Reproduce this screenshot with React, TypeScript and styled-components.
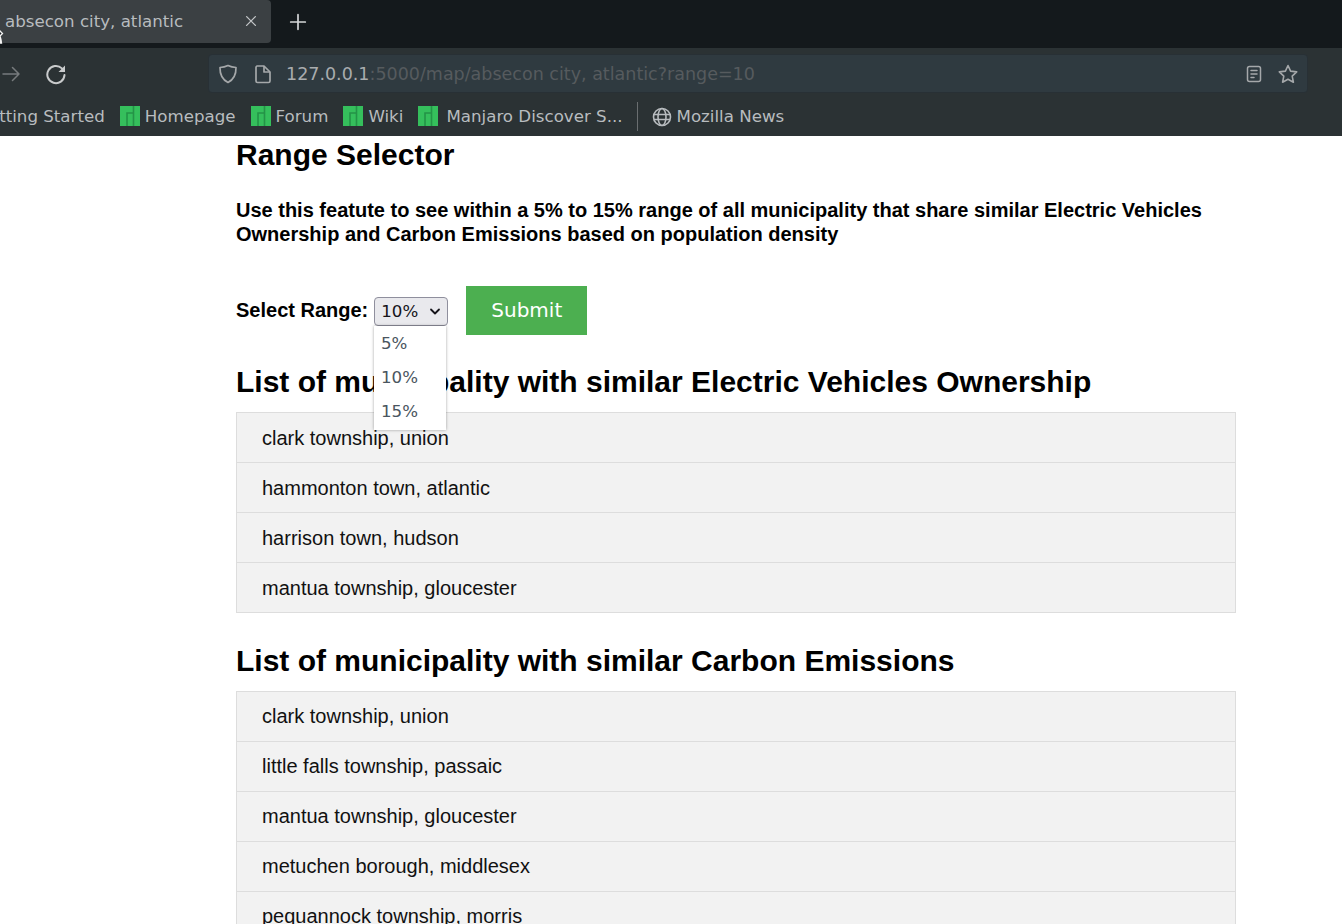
import React from "react";
import styled, { createGlobalStyle } from "styled-components";

const Global = createGlobalStyle`
  html, body { margin: 0; padding: 0; background: #fff; overflow: hidden; height: 924px; }
  #root { width: 1342px; height: 924px; overflow: hidden; }
`;
const Page = styled.div`width:1342px;height:924px;overflow:hidden;display:flex;flex-direction:column;font-family:"Liberation Sans",Arial,sans-serif;color:#000;`;
const Chrome = styled.header`flex:none;height:136px;background:#2b3234;display:flex;flex-direction:column;font-family:"DejaVu Sans",sans-serif;overflow:hidden;`;
const TabBar = styled.div`height:48px;flex:none;background:#14191c;display:flex;align-items:flex-start;position:relative;`;
const Tab = styled.div`width:271px;height:43px;background:#3b4043;border-radius:0 4px 4px 0;display:flex;align-items:center;padding:0 13px 1px 5px;box-sizing:border-box;justify-content:space-between;color:#b8bcbf;font-size:16.67px;`;
const TabClose = styled.span`display:flex;color:#c4c7c9;`;
const NewTab = styled.span`display:flex;margin:13px 0 0 18px;color:#d5d7d8;`;
const Cursor = styled.svg`position:absolute;left:-7px;top:27px;`;
const NavBar = styled.div`height:48px;box-sizing:border-box;padding:3px 0 0 2px;flex:none;display:flex;align-items:center;`;
const NavIcon = styled.span<{ $w: number; $c: string }>`display:flex;width:${p => p.$w}px;color:${p => p.$c};`;
const UrlBox = styled.div`width:1100px;height:39px;background:#2f3a40;border-radius:4px;border:1px solid #283035;box-sizing:border-box;display:flex;align-items:center;padding:0 8px 0 9px;font-size:17.5px;color:#565b5e;`;
const UrlHost = styled.span`color:#a9acae;`;
const UrlText = styled.div`margin-left:14px;flex:1;white-space:nowrap;`;
const UrlIcon = styled.span<{ $m?: number }>`display:flex;color:#a5a8aa;margin-left:${p => p.$m ?? 0}px;`;
const BookmarkBar = styled.div`height:40px;flex:none;display:flex;align-items:center;white-space:nowrap;color:#b8bcbf;font-size:16.67px;`;
const Bookmark = styled.span<{ $ml?: number; $gap?: number }>`display:flex;align-items:center;gap:${p => p.$gap ?? 5}px;margin-left:${p => p.$ml ?? 0}px;`;
const Divider = styled.span`width:1px;height:29px;background:#6a6e70;margin:0 14px 0 14px;`;
const Content = styled.main`margin-left:236px;width:1000px;flex:1;min-height:0;`;
const Title = styled.h2`margin:0;padding-top:1px;font-size:30px;line-height:35px;font-weight:700;`;
const Lead = styled.p`margin:26px 0 0;font-size:20px;line-height:24px;font-weight:700;`;
const FormRow = styled.form`margin-top:40px;height:48px;display:flex;align-items:center;position:relative;`;
const Label = styled.label`font-size:20px;font-weight:700;margin-right:6px;`;
const SelectBox = styled.div`box-sizing:border-box;width:74px;height:29px;margin-top:2px;background:#e9e9ed;border:1px solid #8f8f9d;border-radius:4px;display:flex;align-items:center;justify-content:space-between;padding:0 6px 0 6px;font-family:"DejaVu Sans",sans-serif;font-size:16.67px;color:#15141a;`;
const Menu = styled.ul`position:absolute;left:138px;top:40px;width:72px;height:104px;padding:1px 0;box-sizing:border-box;margin:0;list-style:none;background:#fff;box-shadow:0 0 3px rgba(0,0,0,.35);z-index:2;font-family:"DejaVu Sans",sans-serif;font-size:16.67px;color:#4a5560;`;
const MenuItem = styled.li`height:34px;line-height:34px;padding-left:7px;`;
const Submit = styled.button`margin-left:18px;width:121px;height:49px;border:0;padding:0;background:#4caf50;color:#fff;font-family:"DejaVu Sans",sans-serif;font-size:20px;`;
const ListTitle = styled.h2<{ $mt: number }>`margin:${p => p.$mt}px 0 13px;font-size:30px;line-height:35px;font-weight:700;`;
const List = styled.ul`margin:0;padding:0;list-style:none;border:1px solid #ddd;border-bottom:0;background:#f2f2f2;`;
const Row = styled.li<{ $lh: number }>`box-sizing:border-box;height:50px;line-height:${p => p.$lh}px;padding-left:25px;font-size:20px;color:#111;border-bottom:1px solid #ddd;`;

const Manjaro = () => (
  <svg width="20" height="20" viewBox="0 0 20 20">
    <rect width="20" height="20" fill="#35bf5c" />
    <path d="M7 20V7h6.500M13.500 0v20" fill="none" stroke="#249347" strokeWidth="1.600" />
  </svg>
);
const Cross = ({ s, w }: { s: number; w: number }) => (
  <svg width={s} height={s} viewBox="0 0 16 16" fill="none" stroke="currentColor" strokeWidth={w} strokeLinecap="round"><path d="M3 3l10 10M13 3L3 13" /></svg>
);
const List1 = ["clark township, union", "hammonton town, atlantic", "harrison town, hudson", "mantua township, gloucester"];
const List2 = ["clark township, union", "little falls township, passaic", "mantua township, gloucester", "metuchen borough, middlesex", "pequannock township, morris"];

export default function App() {
  return (
    <Page>
      <Global />
      <Chrome>
        <TabBar>
          <Tab>
            <span>absecon city, atlantic</span>
            <TabClose><Cross s={14} w={1.5} /></TabClose>
          </Tab>
          <NewTab>
            <svg width="18" height="18" viewBox="0 0 16 16" fill="none" stroke="currentColor" strokeWidth="1.500" strokeLinecap="round"><path d="M8 1.500v13M1.500 8h13" /></svg>
          </NewTab>
          <Cursor width="12" height="18" viewBox="0 0 12 18"><path d="M5 2l4.500 4.500L7 9l1.500 7H3z" fill="#1c2023" stroke="#f4f4f4" strokeWidth="1.300" /><path d="M5 10h3l.8 6H5z" fill="#f4f4f4" /></Cursor>
        </TabBar>
        <NavBar>
          <NavIcon $w={36} $c="#777b7d">
            <svg width="18" height="18" viewBox="0 0 18 18" fill="none" stroke="currentColor" strokeWidth="1.500" strokeLinecap="round" strokeLinejoin="round"><path d="M1 9h16M10.500 2.500L17 9l-6.500 6.500" /></svg>
          </NavIcon>
          <NavIcon $w={170} $c="#c9cbcc">
            <svg width="22" height="22" viewBox="0 0 22 22" fill="none" stroke="currentColor" strokeWidth="2" strokeLinecap="round" strokeLinejoin="round" style={{ marginLeft: 7 }}><path d="M19.500 12a8.600 8.600 0 1 1-2.600-6.600L19 7.500" /><path d="M20 2.500v6.500h-6.500z" fill="currentColor" stroke="none" /></svg>
          </NavIcon>
          <UrlBox>
            <UrlIcon>
              <svg width="20" height="20" viewBox="0 0 20 20" fill="none" stroke="currentColor" strokeWidth="1.700" strokeLinejoin="round"><path d="M10 1.500c2.400 1.200 5 1.900 8 2 .2 7-2.200 12-8 15-5.800-3-8.200-8-8-15 3-.1 5.600-.8 8-2z" /></svg>
            </UrlIcon>
            <UrlIcon $m={16}>
              <svg width="18" height="20" viewBox="0 0 18 20" fill="none" stroke="currentColor" strokeWidth="1.700" strokeLinejoin="round"><path d="M3 2h7l6 6v9a1.500 1.500 0 0 1-1.500 1.500h-11A1.500 1.500 0 0 1 2 17V3.500A1.500 1.500 0 0 1 3 2z" /><path d="M10 2v6h6" /></svg>
            </UrlIcon>
            <UrlText><UrlHost>127.0.0.1</UrlHost>:5000/map/absecon city, atlantic?range=10</UrlText>
            <UrlIcon>
              <svg width="18" height="18" viewBox="0 0 18 18" fill="none" stroke="currentColor" strokeWidth="1.500" strokeLinecap="round"><rect x="2.500" y="1.500" width="13" height="15" rx="2" /><path d="M6 5.500h6M6 9h6M6 12.500h3" /></svg>
            </UrlIcon>
            <UrlIcon $m={14}>
              <svg width="22" height="22" viewBox="0 0 22 22" fill="none" stroke="currentColor" strokeWidth="1.600" strokeLinejoin="round"><path d="M11 2.500l2.600 5.600 6.100.8-4.500 4.200 1.200 6.100-5.400-3-5.400 3 1.200-6.100-4.500-4.200 6.100-.8z" /></svg>
            </UrlIcon>
          </UrlBox>
        </NavBar>
        <BookmarkBar>
          <Bookmark $ml={-24}>Getting Started</Bookmark>
          <Bookmark $ml={15}><Manjaro />Homepage</Bookmark>
          <Bookmark $ml={15}><Manjaro />Forum</Bookmark>
          <Bookmark $ml={15}><Manjaro />Wiki</Bookmark>
          <Bookmark $ml={15} $gap={8}><Manjaro /><span>Manjaro Discover S...</span></Bookmark>
          <Divider />
          <Bookmark $gap={5}>
            <svg width="20" height="20" viewBox="0 0 20 20" fill="none" stroke="currentColor" strokeWidth="1.600" style={{ marginTop: 2 }}><circle cx="10" cy="10" r="8.500" /><ellipse cx="10" cy="10" rx="4" ry="8.500" /><path d="M2 7.500h16M2 12.500h16" /></svg>
            Mozilla News
          </Bookmark>
        </BookmarkBar>
      </Chrome>
      <Content>
        <Title>Range Selector</Title>
        <Lead>Use this featute to see within a 5% to 15% range of all municipality that share similar Electric Vehicles Ownership and Carbon Emissions based on population density</Lead>
        <FormRow>
          <Label>Select Range:</Label>
          <SelectBox>
            <span>10%</span>
            <svg width="12" height="12" viewBox="0 0 12 12" fill="none" stroke="#15141a" strokeWidth="1.800" strokeLinecap="round" strokeLinejoin="round"><path d="M2 4.500L6 8.500l4-4" /></svg>
          </SelectBox>
          <Menu>
            <MenuItem>5%</MenuItem>
            <MenuItem>10%</MenuItem>
            <MenuItem>15%</MenuItem>
          </Menu>
          <Submit type="button">Submit</Submit>
        </FormRow>
        <ListTitle $mt={30}>List of municipality with similar Electric Vehicles Ownership</ListTitle>
        <List>{List1.map(t => <Row key={t} $lh={51}>{t}</Row>)}</List>
        <ListTitle $mt={30}>List of municipality with similar Carbon Emissions</ListTitle>
        <List>{List2.map(t => <Row key={t} $lh={49}>{t}</Row>)}</List>
      </Content>
    </Page>
  );
}
